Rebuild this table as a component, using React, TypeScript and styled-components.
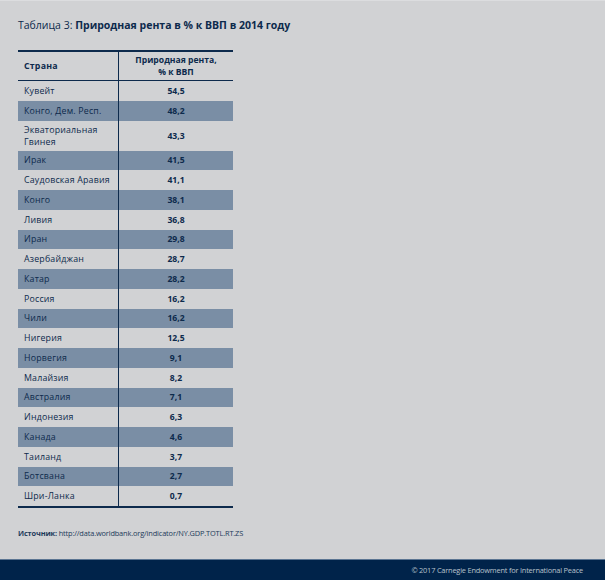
import * as React from 'react';
import styled, { createGlobalStyle } from 'styled-components';

const GlobalStyle = createGlobalStyle`
  html, body {
    margin: 0;
    padding: 0;
    background: #d1d2d4;
  }
`;

const rows: [string, string][] = [
  ['Кувейт', '54,5'],
  ['Конго, Дем. Респ.', '48,2'],
  ['Экваториальная\nГвинея', '43,3'],
  ['Ирак', '41,5'],
  ['Саудовская Аравия', '41,1'],
  ['Конго', '38,1'],
  ['Ливия', '36,8'],
  ['Иран', '29,8'],
  ['Азербайджан', '28,7'],
  ['Катар', '28,2'],
  ['Россия', '16,2'],
  ['Чили', '16,2'],
  ['Нигерия', '12,5'],
  ['Норвегия', '9,1'],
  ['Малайзия', '8,2'],
  ['Австралия', '7,1'],
  ['Индонезия', '6,3'],
  ['Канада', '4,6'],
  ['Таиланд', '3,7'],
  ['Ботсвана', '2,7'],
  ['Шри-Ланка', '0,7'],
];

const Page = styled.div`
  width: 605px;
  height: 580px;
  display: flex;
  flex-direction: column;
  background: #d1d2d4;
  border-top: 1px solid #dcdddf;
  box-sizing: border-box;
  font-family: 'Open Sans', 'Noto Sans', sans-serif;
  color: #0d2a4c;
`;

const Content = styled.div`
  flex: 1;
  padding: 16px 18px 0;
`;

const Title = styled.div`
  font-size: 10.5px;
  line-height: 16px;
  color: #0d2a4c;
  margin-bottom: 17px;
  span {
    font-weight: 700;
  }
`;

const Table = styled.div`
  width: 215px;
  border-top: 2px solid #0d2a4c;
  border-bottom: 2px solid #0d2a4c;
`;

const Row = styled.div<{ $shaded?: boolean; $tall?: boolean; $head?: boolean }>`
  display: grid;
  grid-template-columns: 101px 1fr;
  height: ${(p) => (p.$head ? '29px' : p.$tall ? '30px' : '19.75px')};
  background: ${(p) => (p.$shaded ? '#7a8ea5' : 'transparent')};
  border-bottom: ${(p) => (p.$head ? '1.5px solid #0d2a4c' : 'none')};
  box-sizing: border-box;
`;

const Name = styled.div<{ $bold?: boolean }>`
  display: flex;
  align-items: center;
  padding-left: 6px;
  font-size: 8.8px;
  line-height: 12px;
  font-weight: ${(p) => (p.$bold ? 700 : 400)};
  letter-spacing: 0.2px;
  white-space: pre-line;
  border-right: 1.5px solid #0d2a4c;
`;

const Value = styled.div`
  display: flex;
  align-items: center;
  justify-content: center;
  text-align: center;
  font-size: 8.6px;
  line-height: 12px;
  font-weight: 700;
  white-space: pre-line;
`;

const Source = styled.div`
  margin-top: 20px;
  font-size: 7.4px;
  letter-spacing: -0.15px;
  color: #1d3a5a;
  span {
    font-weight: 700;
  }
`;

const Footer = styled.div`
  height: 21px;
  background: #00234a;
  border-top: 1px solid #5b7592;
  display: flex;
  align-items: center;
  justify-content: flex-end;
  padding-right: 22px;
  box-sizing: border-box;
  font-family: 'Open Sans', 'Noto Sans', sans-serif;
  font-size: 7.4px;
  letter-spacing: -0.2px;
  color: #b8c2cc;
`;

export default function App() {
  return (
    <>
      <GlobalStyle />
      <Page>
        <Content>
          <Title>
            Таблица 3: <span>Природная рента в % к ВВП в 2014 году</span>
          </Title>
          <Table>
            <Row $head>
              <Name $bold>Страна</Name>
              <Value>{'Природная рента,\n% к ВВП'}</Value>
            </Row>
            {rows.map(([name, value], i) => (
              <Row key={name + i} $shaded={i % 2 === 1} $tall={name.includes('\n')}>
                <Name>{name}</Name>
                <Value>{value}</Value>
              </Row>
            ))}
          </Table>
          <Source>
            <span>Источник:</span> http://data.worldbank.org/indicator/NY.GDP.TOTL.RT.ZS
          </Source>
        </Content>
        <Footer>© 2017 Carnegie Endowment for International Peace</Footer>
      </Page>
    </>
  );
}
